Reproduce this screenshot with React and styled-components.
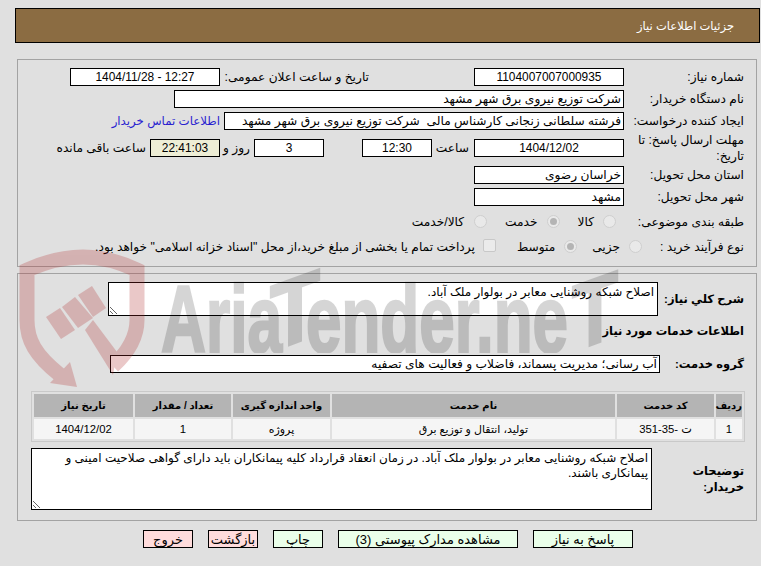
import React from "react";
import styled, { createGlobalStyle } from "styled-components";

const Global = createGlobalStyle`
  html, body { margin: 0; padding: 0; background: #e0e0e0; }
  body { font-family: "Liberation Sans", "DejaVu Sans", sans-serif; font-size: 12.2px; color: #000; }
`;
const Page = styled.div`
  position: relative; width: 761px; height: 566px; overflow: hidden;
  direction: rtl; padding-top: 8px; box-sizing: border-box;
`;
const Header = styled.h1`
  margin: 0 1px 0 0; width: 745px; height: 35px; box-sizing: border-box;
  border: 1px solid #000; background: #8b6c42; color: #fff;
  font-size: 11.5px; font-weight: normal; display: flex; align-items: center; padding-right: 25px;
`;
const Section = styled.section`
  box-sizing: border-box; width: 740px; height: ${p => p.$h}px; margin: ${p => p.$top}px 4px 0 0;
  border: 1px solid #a3a3a3; padding: ${p => p.$pad}px 12px 0 0;
`;
const Row = styled.div`
  display: flex; align-items: center; height: ${p => p.$h || 18}px; margin-top: ${p => p.$top || 0}px;
`;
const Label = styled.div`
  flex: none; width: ${p => p.$w || 120}px; margin-right: ${p => p.$mr || 0}px;
  padding-right: ${p => p.$pr || 0}px; box-sizing: border-box;
  font-weight: ${p => (p.$bold ? "bold" : "normal")};
  font-size: ${p => (p.$bold ? 11.5 : 12.2)}px; line-height: 16px;
`;
const Box = styled.div`
  flex: none; box-sizing: border-box; width: ${p => p.$w}px; height: 18px; margin-right: ${p => p.$mr || 0}px;
  border: 1px solid #000; background: ${p => p.$bg || "#fff"};
  padding: 0 2px; line-height: 16px; white-space: pre; overflow: hidden;
  font-size: ${p => (p.$center ? 11.9 : 12.2)}px;
  text-align: ${p => (p.$center ? "center" : "right")};
`;
const ContactLink = styled.a`
  color: #2a1fd0; margin-right: 4px; text-decoration: none; white-space: nowrap; font-size: 11.8px;
`;
const Radio = styled.span`
  flex: none; box-sizing: border-box; width: 13px; height: 13px; border-radius: 50%;
  margin-right: ${p => p.$mr || 0}px; border: 1px solid #cfcfcf; background: #e9e9e9;
  display: flex; align-items: center; justify-content: center; transform: translateY(-1px);
  &::after { content: ""; width: 7px; height: 7px; border-radius: 50%; background: ${p => (p.$on ? "#b4b4b4" : "transparent")}; }
`;
const Check = styled.span`
  flex: none; box-sizing: border-box; width: 13px; height: 13px; border-radius: 2px;
  margin-right: ${p => p.$mr || 0}px; border: 1px solid #c8c8c8; background: #ebebeb; transform: translateY(-2px);
`;
const Opt = styled.span`
  flex: none; white-space: nowrap; margin-right: ${p => p.$mr || 8}px;
`;
const Note = styled.textarea`
  flex: none; display: block; box-sizing: border-box; width: ${p => p.$w}px; height: ${p => p.$h}px;
  margin: 0; border: 1px solid #000; border-radius: 0; background: #fff; color: #000;
  font: 12px/15px "Liberation Sans", "DejaVu Sans", sans-serif; padding: 2px 3px; outline: none; direction: rtl;
`;
const Title = styled.div`
  font-weight: bold; font-size: 11.5px; height: 18px; line-height: 18px; margin-top: 6px;
`;
const Table = styled.table`
  width: 713px; height: 51px; margin-top: 18px; margin-right: -1px; box-sizing: border-box; table-layout: fixed;
  border: 1px solid #c9c9c9; border-spacing: 2px; border-collapse: separate; font-size: 11px;
`;
const Th = styled.th`
  background: #b4b4b4; height: 23px; padding: 0; font-weight: bold; font-size: 10px; width: ${p => p.$w}px;
`;
const Td = styled.td`
  background: #f5f5f5; height: 20px; padding: 0; text-align: center; font-size: ${p => (p.$num ? 11.3 : 11)}px;
`;
const Footer = styled.div`
  display: flex; gap: 15px; margin: 9px 128px 0 0;
`;
const Btn = styled.button`
  box-sizing: border-box; height: 18px; width: ${p => p.$w}px; padding: 0; border: 1px solid #000;
  background: ${p => (p.$red ? "#ffdcdc" : "#eaffea")}; color: #000;
  font: 13px "Liberation Sans", "DejaVu Sans", sans-serif; direction: rtl;
`;
const Watermark = styled.svg`
  position: absolute; inset: 0; width: 761px; height: 566px; pointer-events: none;
`;
const MarkText = styled.text`
  font-family: "Liberation Sans Narrow", "Liberation Sans", sans-serif; font-weight: bold; font-size: 94px;
  fill: #000; stroke: #000; stroke-width: 2.5px; direction: ltr;
`;

const columns = [
  ["ردیف", 26, "1", true],
  ["کد خدمت", 97, "351-35- ت", true, "ltr"],
  ["نام خدمت", 283, "تولید، انتقال و توزیع برق"],
  ["واحد اندازه گیری", 97, "پروژه"],
  ["تعداد / مقدار", 96, "1", true],
  ["تاریخ نیاز", 99, "1404/12/02", true],
];

export default function App() {
  return (
    <Page>
      <Global />
      <Header>جزئیات اطلاعات نیاز</Header>
      <Section $h={208} $top={16} $pad={8}>
        <Row>
          <Label>شماره نیاز:</Label>
          <Box $w={150} $center>1104007007000935</Box>
          <Label $w={149} $mr={105}>تاریخ و ساعت اعلان عمومی:</Label>
          <Box $w={150} $center>12:27 - 1404/11/28</Box>
        </Row>
        <Row $top={4}>
          <Label>نام دستگاه خریدار:</Label>
          <Box $w={450}>شرکت توزیع نیروی برق شهر مشهد</Box>
        </Row>
        <Row $top={4}>
          <Label>ایجاد کننده درخواست:</Label>
          <Box $w={400}>فرشته سلطانی زنجانی کارشناس مالی  شرکت توزیع نیروی برق شهر مشهد</Box>
          <ContactLink href="#">اطلاعات تماس خریدار</ContactLink>
        </Row>
        <Row $top={9}>
          <Label>مهلت ارسال پاسخ: تا تاریخ:</Label>
          <Box $w={150} $center>1404/12/02</Box>
          <Label $w={42} $pr={5}>ساعت</Label>
          <Box $w={70} $center>12:30</Box>
          <Box $w={70} $mr={38} $center>3</Box>
          <Label $w={34} $pr={4}>روز و</Label>
          <Box $w={70} $bg="#eeeed6" $center>22:41:03</Box>
          <Label $w={100} $pr={4}>ساعت باقی مانده</Label>
        </Row>
        <Row $top={9}>
          <Label>استان محل تحویل:</Label>
          <Box $w={150}>خراسان رضوی</Box>
        </Row>
        <Row $top={4}>
          <Label>شهر محل تحویل:</Label>
          <Box $w={150}>مشهد</Box>
        </Row>
        <Row $top={7} $h={18}>
          <Label $w={128}>طبقه بندی موضوعی:</Label>
          <Radio />
          <Opt $mr={9}>کالا</Opt>
          <Radio $on $mr={18} />
          <Opt $mr={9}>خدمت</Opt>
          <Radio $mr={18} />
          <Opt $mr={10}>کالا/خدمت</Opt>
        </Row>
        <Row $top={7}>
          <Label $w={102}>نوع فرآیند خرید :</Label>
          <Radio />
          <Opt $mr={9}>جزیی</Opt>
          <Radio $on $mr={15} />
          <Opt $mr={9}>متوسط</Opt>
          <Check $mr={21} />
          <Opt $mr={8}>پرداخت تمام یا بخشی از مبلغ خرید،از محل "اسناد خزانه اسلامی" خواهد بود.</Opt>
        </Row>
      </Section>
      <Section $h={248} $top={6} $pad={8}>
        <Row $h={34}>
          <Label $bold $w={86}>شرح کلي نياز:</Label>
          <Note $w={550} $h={34} readOnly value="اصلاح شبکه روشنایی معابر در بولوار ملک آباد." />
        </Row>
        <Title>اطلاعات خدمات مورد نیاز</Title>
        <Row $top={15}>
          <Label $bold $w={84}>گروه خدمت:</Label>
          <Box $w={550}>آب رسانی؛ مدیریت پسماند، فاضلاب و فعالیت های تصفیه</Box>
        </Row>
        <Table>
          <thead>
            <tr>{columns.map(c => <Th key={c[0]} $w={c[1]}>{c[0]}</Th>)}</tr>
          </thead>
          <tbody>
            <tr>{columns.map(c => <Td key={c[0]} $num={c[3]} dir={c[4]}>{c[2]}</Td>)}</tr>
          </tbody>
        </Table>
        <Row $h={62} $top={6}>
          <Label $bold $w={92}>توضیحات خریدار:</Label>
          <Note $w={621} $h={62} readOnly value={"اصلاح شبکه روشنایی معابر در بولوار ملک آباد. در زمان انعقاد قرارداد کلیه پیمانکاران باید دارای گواهی صلاحیت امینی و\nپیمانکاری باشند."} />
        </Row>
      </Section>
      <Footer>
        <Btn $w={100}>پاسخ به نیاز</Btn>
        <Btn $w={180}>مشاهده مدارک پیوستی (3)</Btn>
        <Btn $w={50}>چاپ</Btn>
        <Btn $w={50} $red>بازگشت</Btn>
        <Btn $w={50} $red>خروج</Btn>
      </Footer>
      <Watermark viewBox="0 0 761 566" aria-hidden="true">
        <defs>
          <clipPath id="markBase"><rect x="150" y="262" width="480" height="91" /></clipPath>
        </defs>
        <g opacity=".25" fill="#b02828">
          <path fill="none" stroke="#b02828" strokeWidth="15" d="M60 375C35 355 27 340 27 320L27 270C45 262 65 257 83 257C100 257 120 262 137 270L137 320C137 340 125 355 113 366" />
          <polygon points="50,383 77,387 70,362" />
          <polygon points="46,317 60,308 75,330 61,339" />
          <polygon points="62,307 75,297 93,318 78,328" />
          <polygon points="78,295 92,286 106,308 93,317" />
          <polygon points="93,320 117,352 113,375 85,330" />
        </g>
        <g opacity=".16" clipPath="url(#markBase)">
          <MarkText x="161" y="352" textLength="121" lengthAdjust="spacingAndGlyphs">Aria</MarkText>
          <MarkText x="306" y="352" textLength="262" lengthAdjust="spacingAndGlyphs">ender.ne</MarkText>
          <MarkText transform="translate(270 352) skewY(-20)" textLength="50" lengthAdjust="spacingAndGlyphs">T</MarkText>
          <MarkText transform="translate(572 352) skewY(-20)" textLength="46" lengthAdjust="spacingAndGlyphs">T</MarkText>
        </g>
      </Watermark>
    </Page>
  );
}
